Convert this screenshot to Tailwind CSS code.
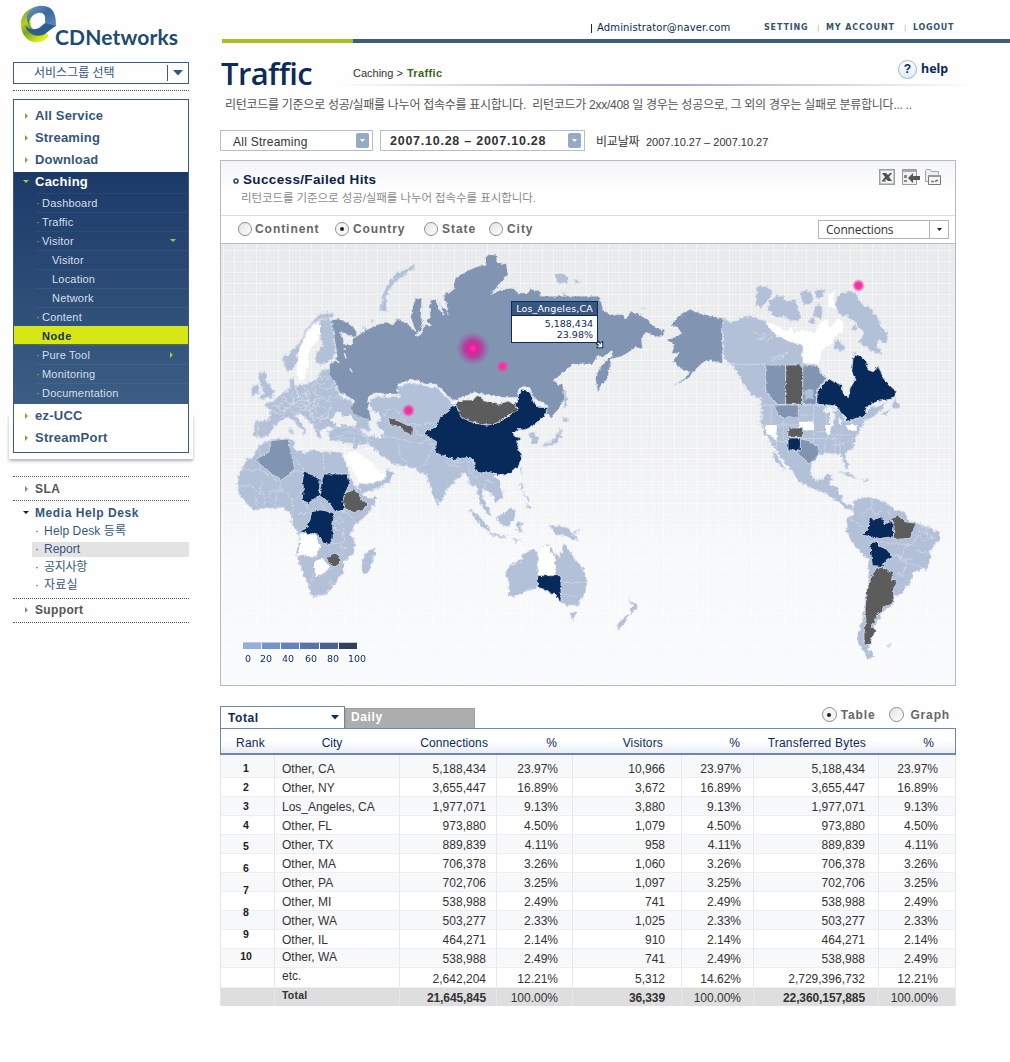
<!DOCTYPE html>
<html lang="ko">
<head>
<meta charset="utf-8">
<title>CDNetworks - Traffic</title>
<script src="https://cdn.jsdelivr.net/npm/@tailwindcss/browser@4"></script>
</head>
<body class="w-[1010px] h-[1062px] overflow-hidden bg-[#fefefe] font-['Liberation_Sans','Noto_Sans_CJK_KR',sans-serif] text-[12px] text-[#333]">
<div class="flex h-full">

<!-- Sidebar -->
<aside class="w-[220px] shrink-0 pl-[13px] text-[#35567c]">
  <div class="h-[62px] pl-[7px] pt-[5px] flex">
    <svg class="shrink-0" width="37" height="40" viewBox="0 0 37 40">
      <defs>
        <linearGradient id="lg" x1="0" y1="0" x2="0.6" y2="1"><stop offset="0" stop-color="#6f9440"/><stop offset=".4" stop-color="#b4cf22"/><stop offset=".6" stop-color="#7da024"/><stop offset="1" stop-color="#e0ee1c"/></linearGradient>
        <linearGradient id="lb" x1="0" y1="0" x2="1" y2="1"><stop offset="0" stop-color="#6f9cc9"/><stop offset=".5" stop-color="#3a699c"/><stop offset="1" stop-color="#5f8fc0"/></linearGradient>
      </defs>
      <path fill="url(#lg)" d="M16 2C9 3 3 8 1 16c-1 8 2 16 9 20 7 3 14 1 19-5l-9-7c-3 2-6 1-8-1-3-4-2-11 3-14l6-3z"/>
      <path fill="url(#lb)" d="M12 4c4-4 13-4 18-1 5 4 6 9 6 18l-9 1c-1-3-2-4-2-7 1-5-2-8-7-7-6 1-10 6-9 12C5 13 7 8 12 4z"/>
      <path fill="#2e5d90" d="M5 20c4 5 9 5 14 3l6-5 11 3c-4 2-7 5-11 8-8 4-17 1-20-9z"/>
    </svg>
    <div class="pt-[21px] -ml-[2px] font-['Lato','Open_Sans',sans-serif] font-bold text-[21px] leading-[22px] tracking-[0.160px] text-[#1c4a73]">CDNetworks</div>
  </div>
  <div class="w-[176px] h-[22px] border border-[#3d5a82] flex items-center pl-[20px] text-[12px] tracking-[0px]">
    <span class="w-[133px]">서비스그룹 선택</span>
    <span class="w-px h-[16px] bg-[#3d5a82]"></span>
    <svg class="ml-[5px]" width="10" height="6"><path d="M0 0h10L5 5.500z" fill="#35567c"/></svg>
  </div>
  <div class="w-[176px] mt-[6px] border-t border-dotted border-[#555]"></div>

  <nav class="relative w-[176px] mt-[8px] h-[354px] border border-[#3d5a82] bg-white">
    <div class="absolute -left-[5px] -right-[5px] -bottom-[7px] h-[45px] -z-10 shadow-[0_2px_3px_rgba(0,0,0,0.3)] bg-white"></div>
    <div class="h-[72px] pt-[5px] text-[13px] font-bold tracking-[0.160px]" id="top"></div>
    <div class="h-[232px] bg-gradient-to-b from-[#1c3a68] to-[#3c5e84]">
      <div class="flex items-center h-[20px] pl-[9px] text-white font-bold text-[13px] tracking-[0.250px]"><svg width="6" height="4" class="mr-[6px]"><path d="M0 0h6L3 3z" fill="#a3c93a"/></svg>Caching</div>
      <div id="sub" class="pt-px"></div>
    </div>
    <div class="text-[13px] font-bold tracking-[0.250px] pt-px" id="bot"></div>
  </nav>

  <div class="w-[176px] mt-[23px] border-t border-dotted border-[#555]"></div>
  <div class="w-[176px] h-[23px] flex items-center pl-[12px] font-bold text-[#555] tracking-[0.5px]"><svg width="4" height="6" class="mr-[6px]"><path d="M0 0v6L3 3z" fill="#888"/></svg>SLA</div>
  <div class="w-[176px] border-t border-dotted border-[#555]"></div>
  <div class="w-[176px] h-[97px] pt-[3px]">
    <div class="h-[18px] flex items-center pl-[10px] font-bold tracking-[0.580px]"><svg width="6" height="4" class="mr-[6px]"><path d="M0 0h6L3 3z" fill="#123"/></svg>Media Help Desk</div>
    <div class="ml-[19px] text-[12px] leading-[18px] tracking-[0.1px]">
      <div class="pl-[3px]">·<span class="ml-[5px]">Help Desk 등록</span></div>
      <div class="pl-[3px] bg-[#e3e3e3] h-[15px] leading-[15px] my-[1.500px] tracking-[0px]">·<span class="ml-[5px]">Report</span></div>
      <div class="pl-[3px]">·<span class="ml-[5px] tracking-[-0.300px]">공지사항</span></div>
      <div class="pl-[3px]">·<span class="ml-[5px]">자료실</span></div>
    </div>
  </div>
  <div class="w-[176px] border-t border-dotted border-[#555]"></div>
  <div class="w-[176px] h-[23px] flex items-center pl-[12px] pb-[2px] font-bold text-[#555] tracking-[0.350px]"><svg width="4" height="6" class="mr-[6px]"><path d="M0 0v6L3 3z" fill="#888"/></svg>Support</div>
  <div class="w-[176px] border-t border-dotted border-[#555]"></div>
</aside>

<!-- Main -->
<main class="w-[790px]">
  <div class="h-[39px] flex items-start pt-[21px] leading-[14px]">
    <span class="ml-[371px] w-[173px] text-[#12294f] whitespace-nowrap font-['DejaVu_Sans',sans-serif] text-[10px] tracking-[0.130px] flex items-center"><i class="w-px h-[9px] bg-[#12294f] mr-[5px]"></i>Administrator@naver.com</span>
    <span class="flex items-center font-['DejaVu_Sans'] font-bold text-[8px] text-[#34546f] whitespace-nowrap">
      <span class="w-[53px] tracking-[0.850px]">SETTING</span><span class="w-[9px] text-[#aaa] font-normal text-[7px]">|</span>
      <span class="w-[78px] tracking-[0.900px]">MY ACCOUNT</span><span class="w-[9px] text-[#aaa] font-normal text-[7px]">|</span>
      <span class="tracking-[0.700px]">LOGOUT</span></span>
  </div>
  <div class="flex h-[4px]"><span class="ml-[2px] w-[131px] bg-[#a8bf2b]"></span><span class="flex-1 bg-[#3e5b80]"></span></div>

  <div class="h-[41px] flex items-center">
    <h1 class="w-[133px] pl-[1px] pt-[18px] font-['Open_Sans',sans-serif] font-semibold text-[31px] leading-[30px] tracking-[-0.600px] text-[#0b2b5b]">Traffic</h1>
    <span class="pt-[19px] text-[11px] w-[545px]">Caching &gt; <b class="text-[#3a6324] tracking-[0.350px] ml-px">Traffic</b></span>
    <span class="mt-[11px] w-[19px] h-[19px] rounded-full border border-[#9dbac6] bg-gradient-to-b from-white to-[#dfecf7] flex items-center justify-center font-bold text-[12px] text-[#0b2b5b]">?</span>
    <b class="mt-[11px] ml-[4px] text-[12.500px] font-['Noto_Sans'] text-[#0b2b5b]">help</b>
  </div>
  <div class="ml-[115px] w-[640px] h-[2px] bg-gradient-to-r from-transparent via-[#9fa6c4] to-transparent"></div>
  <p class="h-[44px] pl-[5px] pt-[10px] text-[12px] leading-[18px] tracking-[-0.280px] text-[#555] whitespace-nowrap">리턴코드를 기준으로 성공/실패를 나누어 접속수를 표시합니다.&nbsp; 리턴코드가 2xx/408 일 경우는 성공으로, 그 외의 경우는 실패로 분류합니다... ..</p>

  <div class="h-[30px] flex items-start">
    <div class="w-[153px] h-[21px] border border-[#b4bec8] bg-white flex items-center pl-[12px] tracking-[0.250px]"><span class="w-[123px] pt-[2px]">All Streaming</span><span class="w-[13px] h-[15px] rounded-[2px] bg-[#96aac6] flex items-center justify-center"><svg width="5" height="3"><path d="M0 0h5L2.500 3z" fill="#fff"/></svg></span></div>
    <div class="ml-[7px] w-[205px] h-[21px] border border-[#b4bec8] bg-white flex items-center pl-[9px] font-bold text-[12.500px] tracking-[0.750px]"><span class="w-[178px] pt-[2px]">2007.10.28 – 2007.10.28</span><span class="w-[13px] h-[15px] rounded-[2px] bg-[#96aac6] flex items-center justify-center"><svg width="5" height="3"><path d="M0 0h5L2.500 3z" fill="#fff"/></svg></span></div>
    <div class="ml-[11px] h-[24px] flex items-center text-[12px]"><span class="w-[50px] tracking-[-0.200px]">비교날짜</span><span class="text-[11px]">2007.10.27 – 2007.10.27</span></div>
  </div>

  <section class="w-[736px] h-[526px] border border-[#b5bac4] bg-white">
    <div class="h-[55px] border-b border-[#dcdde0] bg-gradient-to-b from-[#f3f4f6] to-white to-60% flex justify-between">
      <div class="pl-[12px] pt-[11px]">
        <div class="flex items-center h-[17px]"><svg width="6" height="6" class="mr-[4px]"><circle cx="3" cy="3" r="2" fill="none" stroke="#35567c" stroke-width="1.700"/></svg><b class="text-[13.500px] text-[#0c2448] tracking-[0.350px]">Success/Failed Hits</b></div>
        <p class="pl-[8px] text-[11.500px] leading-[18px] text-[#8b8b8b] tracking-[-0.080px]">리턴코드를 기준으로 성공/실패를 나누어 접속수를 표시합니다.</p>
      </div>
      <div class="flex pt-[8px] pr-[13px]">
        <svg class="mr-[7px]" width="16" height="16"><rect x=".75" y=".75" width="14.500" height="14.500" fill="#f1f1f1" stroke="#9aa1a1" stroke-width="1.500"/><path d="M3 4h4l2 2 2-2h2l-3 4 3 4H9L7 10l-2 2H3l3-4z" fill="#4b5250"/><path d="M3 12h4" stroke="#4b5250"/></svg>
        <svg class="mr-[5px]" width="18" height="16"><path d="M.5.500h14v15H.500z" fill="#f0f0f0" stroke="#9b9b9b"/><path d="M1 2h13" stroke="#aaa" stroke-width="2"/><path d="M2 6h3v3H2zM2 11h3v2H2z" fill="#888"/><path d="M6 9l5-5v3h7v4h-7v3z" fill="#555"/></svg>
        <svg width="17" height="16"><path d="M.5 12.500V1.500l1-1h4l1 2h7v10z" fill="#eee" stroke="#a5a5a5"/><path d="M3.500 6.500h12v9h-12z" fill="#f7f7f7" stroke="#777"/><path d="M3 6h13v2H3z" fill="#999"/><path d="M6 12.500h3M10 12.500l3-1.500" fill="none" stroke="#777" stroke-width="1.500"/></svg>
      </div>
    </div>
    <div class="h-[28px] pb-px border-b border-[#b5bac4] flex items-center text-[12px] font-bold text-[#666] tracking-[0.950px]">
      <div class="ml-[17px] w-[97px] flex items-center gap-[3px]"><i class="w-[14px] h-[14px] rounded-full border border-[#8f8f8f] bg-gradient-to-br from-[#e2e2e2] to-white"></i>Continent</div>
      <div class="w-[89px] flex items-center gap-[4px] tracking-[0.900px]"><i class="w-[14px] h-[14px] rounded-full border border-[#8f8f8f] bg-[#f5f5f5] flex items-center justify-center"><i class="w-[4px] h-[4px] rounded-full bg-[#222]"></i></i>Country</div>
      <div class="w-[65px] flex items-center gap-[4px]"><i class="w-[14px] h-[14px] rounded-full border border-[#8f8f8f] bg-gradient-to-br from-[#e2e2e2] to-white"></i>State</div>
      <div class="w-[329px] flex items-center gap-[4px]"><i class="w-[14px] h-[14px] rounded-full border border-[#8f8f8f] bg-gradient-to-br from-[#e2e2e2] to-white"></i>City</div>
      <div class="w-[131px] h-[19px] mt-px border border-[#b5b5b5] flex items-center pl-[7px] font-normal text-[#333] text-[12px] tracking-[-0.200px] font-['Open_Sans']"><span class="w-[103px]">Connections</span><span class="w-px h-full bg-[#b5b5b5]"></span><svg class="ml-[7px]" width="5" height="3"><path d="M0 0h5L2.500 3z" fill="#222"/></svg></div>
    </div>

    <div class="relative h-[441px]">
      <svg class="block" width="734" height="441" viewBox="221 244 734 441">
        <defs>
          <linearGradient id="sea" x1="0" y1="0" x2="0" y2="1"><stop offset="0" stop-color="#e8e9ea"/><stop offset=".45" stop-color="#eff0f2"/><stop offset=".7" stop-color="#f7f8fa"/><stop offset="1" stop-color="#f9fafb"/></linearGradient>
          <pattern id="grid" width="11" height="11" x="223" y="250" patternUnits="userSpaceOnUse"><path d="M.5 0v11M0 .500h11" stroke="#fff" stroke-opacity=".42"/><path d="M6.500 0v11M0 6.500h11M3.500 0v11M0 3.500h11" stroke="#fff" stroke-opacity=".1"/></pattern>
          <radialGradient id="hot"><stop offset="0" stop-color="#ff35b0"/><stop offset=".25" stop-color="#e0209c"/><stop offset=".5" stop-color="#bc2c98" stop-opacity=".8"/><stop offset="1" stop-color="#a04c9c" stop-opacity="0"/></radialGradient>
          <radialGradient id="dot"><stop offset="0" stop-color="#ff1f9c"/><stop offset=".5" stop-color="#f23aa6"/><stop offset="1" stop-color="#f23aa6" stop-opacity="0"/></radialGradient>
          <filter id="coast" x="-5%" y="-5%" width="110%" height="110%" color-interpolation-filters="sRGB"><feTurbulence type="fractalNoise" baseFrequency=".08" numOctaves="3" seed="4"/><feDisplacementMap in="SourceGraphic" scale="17" xChannelSelector="R" yChannelSelector="G"/></filter>
          <filter id="edge" x="-5%" y="-5%" width="110%" height="110%" color-interpolation-filters="sRGB"><feTurbulence type="fractalNoise" baseFrequency=".1" numOctaves="2" seed="9"/><feDisplacementMap in="SourceGraphic" scale="11" xChannelSelector="R" yChannelSelector="G"/></filter>
        </defs>
        <rect x="221" y="244" width="734" height="441" fill="url(#sea)"/>
        <rect x="221" y="244" width="734" height="441" fill="url(#grid)"/>

        <g transform="translate(220 245) scale(.33333)">
          <g filter="url(#coast)" fill="#b2c0d8" stroke="#d3dbe8" stroke-width="2" stroke-linejoin="round">
            <!-- Europe and Arctic -->
            <path d="M190 350v-15l25-15 30-35 15-35 25-30 20-15 15-5 25 10-15 12h-30l-25 18-17 25-13 30-10 25-3 30-17 25-10 5-10-10z"/>
            <path d="M300 225l30-5 10 40 10 60-15 25-35 17-15-12 5-25 20-25-10-30z"/>
            <path d="M120 385l15-5 7 15-7 10 15 15 15 20-10 18-30 4-10-4 15-13-5-20-10-20zM95 425l20-10 3 30-23 10z"/>
            <path d="M330 370l-25 5-10 20-10 10-35 15-25 5-5-25-12 5 2 25-25 15-20 20-35 15 20 15v30l-45 5-5 40 25 10 25-15 15-25 15-10 25-15 20 15 25 30-5 15 15-20-20-25-15-20 15-5 35 30 10 20 5 20 15 5-5-20 20-15h15l10 10 35-5 25 10 25-10 20 10-5-40-30-20-20-30-40-20zM210 550h6v20h-6z"/>
            <path d="M325 560l25-10 35-5 35 10 20 15-10 20-30 5-40-5-30-5z"/>
            <path d="M475 195l10-15 5-40 20-35 20-20 30-13 20-12v12l-30 20-30 23-20 35-3 30 8 20z"/>
            <path d="M1003 330l18-5 24 12v18l-30 3z" transform="translate(0-240)"/>
            <path d="M1060 102l25 8-15 6zM1028 138l8 6-8 4zM1260 190l20-3-10 6zM430 245l12 5-8 12zM455 222l10 5-8 6z"/>
            <!-- Asia -->
            <path d="M445 470l25-15h70l-10-30 50-10 70 15 50 50h60l140 160-80 50 20 20 10 30-5 20-20 15-5-20-15-15-15-10-5 20 10 25 15 25 5 15-15-10-15-25-10-30-5-25-20-10-15-35-15 10-15 20-30 30-5 25-15 12-15-27-15-40-5-25-15 5-15-20-25-5-40-5-30-20-35-30-15-15-25 5-15 15-8-20 8-15-25 0-35-3 35-15 35 5 45 10 15-30-10-45z"/>
            <path d="M420 715l30 0 40-12 10-28 22 10-12 25-35 20-50 15-10-20zM650 765l10 15-8 8zM925 565l20-5 10 30-15 10-10-20zM1030 515l15 10-15 10zM1020 550l8 25-23 20-30 10-10-5 35-15 10-15zM1035 435l7 35-7 20-5-30zM900 672l6-6 0 18z"/>
            <path d="M745 793l30 17 33 40-3 10-25-20zM808 863l52 12-2 5-48-10zM830 815l25-10 15-18 18 13-8 25-15 20-25-8zM890 835l25-2-15 12 10 15h-17zM990 840l50 5 20 25 20 17-25-4-20-13-20 3-15-18zM900 715l10 10-5 15zM905 740l25 25-5 5zM920 775l15 15-12 0zM880 885l25-3-20 8zM1055 865l22-14-6 12z"/>
            <!-- Africa -->
            <path d="M130 595l20-10 55-5 17 5-2 25 30 15 30-10 30 5 55 2 7 18 18 50 10 25 15 20 25 25 30-5-5 20-25 35-40 35-5 25 10 25-5 30-30 25 2 30-17 25-20 25-25 20-35 3-5-23-25-55-15-45 8-45-3-20-20-30v-25l-25-23-40 3-50 5-20-20-25-30-3-25 3-25 25-50 20-10 15-30zM465 905v20l-20 60h-15l-5-20 7-35z"/>
            <!-- Oceania -->
            <path d="M862 965l33-15 20-25 25-12 15 12 5-20 30-5 10 25 20 10 15-40 15 30 35 40 17 40-12 50-15 25-30 3-20-10-15-28-25-5-30-15-40 15-35 15-15-5 5-30-12-35zM1050 1103h20l-10 22zM1225 1057l15 18 15 8-20 24-5-12 7-15zM1225 1105l2 10-17 25-12 12-10-12 17-15z"/>
            <!-- North America -->
            <path d="M1507 220l33 12 25-12 25-8 42 16 78 62 38 10v58l42 2 15 30 15 10-30 35v43l40 7 35 15 10 30 45-15 25-25 55-15-30 35-35 15-15 30-15 25-5 30-26 14 12 46-10-4-16-40-41-1-20 5-23 20-7 30 15 25 30-5 10-15 15 5-10 25 25 15 3 15 17 30 20 5 5 15-25-5-20-20-30-20-30-15-30-10-25-15-15-20-20-25-25-35-45-65-10-35v-65l-35-20-25-40-20-35-33-30z"/>
            <path d="M1660 615l20 30 15 30-15-10-20-30zM1610 125l25-3 25 18-15 25-20 23-22-8 7-20zM1650 165l30-15 20 20 25-5 20 55-25 10-30-15h-30l-15-25zM1744 142l26-7 9 22-10 22-18 2zM1788 134h29l-12 24h-18zM1782 182l20-5 8 30-12 14-16-8zM1768 222l14-4 4 18h-14z"/>
            <path d="M1862 144l28-6 20 8 12 26 28 20 22 24 12 30 20 20-4 28-28-8-6 14 22 26-22-2-30-18-18-16 14-24-20-28-26-22-24-8-18-28zM1842 290l14-6 20 28-14 6-20-8zM1895 246l10-4 6 10-10 6zM1898 322l10 0-6 10z"/>
            <path d="M2015 480l10-20 20 30h-25zM1858 680l22 3 30 14-5 4-35-14zM1920 705l25-2v8zM1985 505l25-12-10 18z"/>
            <!-- South America -->
            <path d="M1900 770l30-15 15 2 35 8 30 15 10 13 35 7 10 25 25 10 30 10 35 15 3 20-28 40v30l-10 20-40 10-5 25-30 40-15 8-15-8 5 30-35 30-35 60-5 50 20 20-20 5-30-45-2-30 17-50 15-100v-70l-20-20-25-30-22-40 2-30 20-15v-20zM2000 1203l15-6-8 8z"/>
          </g>

          <!-- Inland seas -->
          <g filter="url(#coast)" fill="#eef0f3">
            <path d="M335 525l10-20 20-5 5 15 20-5 20 20-5 15-25-5-30 5zM450 505l25-5 5 20-10 20 20 20-5 20-20-5-5-30-15-25z"/>
            <path d="M1805 490l25-5 20 12-15 5 15 5-10 35-12 5 2-40-15-5zM1855 510l12 20-10 15z"/>
            <path d="M415 600l20 20 25 20 15 15-12-3-28-20zM367 620l10 20 20 50 15 20-3 5-15-15-20-50zM1922 498l24-18 8 4-24 20z"/>
          </g>

          <!-- Inner borders -->
          <g fill="none" stroke="#d6deea" stroke-width="2" filter="url(#coast)">
            <path d="M285 405l20 25 40-5M285 430l5 25 50 0 55 10M150 495l40 20 10-25-20-20M190 445l15 30 30-20-10-30M205 475l20 30 35-15-15-35 35-15 20 20-15 30-25 5M260 490l20 35 30-15 25-20-10-35M200 490l25 20M240 440l25 15 0 30M310 510l-15 30-20 0M115 530l-5 45M170 465l15 15 25-30M225 480l30 15M265 430l-10 30 30 25M295 395l35 5M300 520l40 0M160 480l20 5M215 440l5 30M270 505l35 20 20-10M290 445l-10 50M305 460l25 10"/>
            <path d="M165 475l20 25 25-10 15-35-20-15M180 455l30 25 40-15 30 5M190 500l30-30 40 15 30-25M230 430l10 40 30 25 10 30M250 425l10 30M175 485l20-30M235 500l20-25 40 30M290 480l30 10M330 480l-5 40M270 430l20-15 25 5"/>
            <path d="M495 515l5-20 25-5 35 45 35 5 55-10M470 580l35-5 35 5 35 15M535 595l5 40 20 15-10 25M590 600l30-15 20 20-20 45-25 25M620 575l30 30 20 25 40 25 40-5M680 640l5 20 35 5M705 660l15-20M440 575l5 30-25 5M385 600l40-10M430 550l30 25M740 660l15 30 20 10 10 20 20 10M755 640l10 40M780 680l20 30 20 0M580 540l15 30 50-5M425 560l30 30"/>
            <path d="M70 675h50v-70M110 670l70 40 5 30M180 705l45-25 30 0M310 620v65M60 720l40 5 20 25M120 750l5-40M150 765v-25l40-5M190 735l30 30 25-25M215 755l5 55M245 765l30 35M235 810l40-10M345 800l35 0 30 35M340 850l30 5 0 40M330 895l30-5 10 40M250 935h45M280 985l-5 25M285 995l30-10 25-20M365 905l15 10M300 775l20 20M105 750l10 40M130 740l5 40M170 750l-5 40M225 640l30 40M326 1016l6-8 8 6-6 9zM350 825l12-8 6 10-12 8z"/>
            <path d="M1540 270M1600 260l20 10 30-5 8 12-18 10-20-8M1610 280l30-5M1650 340l25-5 30-15-22 22-28 2M1955 760l5 50 30-10M2010 780l-5 30M1890 820l30 20 20 30M1975 890l50 5 50 5 20-30M2095 850l15 40 30-15M2060 890l-20 60 40-10M2020 930l40 15-10 40M2085 915l40 10M2100 850l5-20M2125 840l-5 40M2050 950l60 20M2030 985l25 10M1950 790l-30 20M2105 860l40 20"/>
          </g>
          <g fill="none" stroke="#d6deea" stroke-width="2" filter="url(#edge)">
            <path d="M1507 358h130M1637 358v80l32 42M1610 480h240M1653 480v65M1610 540h35M1690 520v65M1670 540h70M1735 480v50M1780 480v120M1740 510h40M1740 555h45M1745 580h105M1785 560h40M1820 500v40M1845 580v50M1860 575v50M1830 570h60M1640 590h70M1670 590v35M1750 600h45v30M1880 530l30 10M1870 600l30-20M1840 600l40-5M1815 590v35M1895 520v30M1925 495l-20 30"/>
            <path d="M1029 1012h72M1023 1045l50 12"/>
          </g>

          <g filter="url(#edge)" stroke="#d3dcea" stroke-width="2.500" stroke-linejoin="round">
            <!-- 20-40 band -->
            <g fill="#8195b3">
              <path stroke-width="1.500" d="M335 225l20-3 30 13 23 20 2 15-15 5-20-10-17-3 10 13 4 25 23 0 5-20 25-15 15-10 30-15 25-8 25 8 10-18 30 13 15 13 12 12-15-45 5-25 10-30h18l2 30-5 25 12 22 18-22-5-28 5-20 20-5 12 25 15 5 5 20-5-40-10-20 32-18 5-35 38-22 30-13 25-3-5-22 15-10 20 2 2 23 28 5 5 30-25 25-25 35 30-15 35-5 15 15h30l5-13 30 8 2 15h178l10 40 20 15h40l10 13 10-20 25 5 25 15 25 25 30 10-5 15-20 5-15-10-17-5-13 20 3 30-18-5-40 25-35 10-5 25-5 30-25 30-5 15-8-45 18-35 30-30 5-17-20 12-10 10-15-5-15 25h-60l-40 35-20 15 15 12 13-2 7 40-15 30-25 30-15-10 5-25-45-25-10-30-25-5-10 15v20h-45l-85-15-65 25-50-50h-30l-40-15-45 15-5 20 10 10h-40l-30-5-25 15v25l10 45-55-20-5-20 10-20-25-15-25-15-10-30-15-15v-35l15-10 10-15-5-20-5-25z"/>
              <path stroke-width="1.500" d="M1410 193l40 17 57 10v135l-22-5-25-5-20 15-20 20-15 20-45 22 40-27 10-15-30-10-20-20 15-25-20 0 10-25-25-15 30-10 15-10-15-20-18-5 18-20 20-15z"/>
              <path d="M150 587l55-5 7 33 13 60-40 30-25-15-55-45 43-25zM1637 360h60v118h-29l-31-43zM1748 360h42l15 30 15 10-30 35v43h-42zM1662 480h73v35l-45 3-15-8zM1741 582l19 3 35 20v25l-25 27-20-17-25-20 16-3z"/>
            </g>
            <path fill="#b2c0d9" stroke="none" d="M1752 437l15-5 13 2 2 30-15-6-12 6z"/>
            <!-- No traffic -->
            <g fill="#fff" stroke="none">
              <path d="M280 240h20v25l-10 25-18 20-10 30 6 15-10 20v20l-18 15-8-25-2-20 6-45 9-20 15-35z"/>
              <path d="M390 620h20l25 20 20 10 20 30 25 5-10 18-40 12h-30l-15-30-20-30-13-20zM238 865l52 5 5 25 7 2-12 38-58-5 8-30zM290 945l20-5 20 25-20 20-25 10-3-35zM953 920l12-17h25v17l15 13 1 58h-53z"/>
              <path d="M1632 228l33 12 35 20 15-15 5 20 30-10 35 10 15-35 20-5 10 25 25-30 15 10v30l-30 15v20l-30 15-15 45h-47l2-55-40-10-45-20zM1637 540h33v48l-33-28zM1737 530h43l5 25h-35l-2-7-11-3zM1815 540h17v20l-7 13-8-13zM1880 540h30v18l-28-3zM1825 150l25-15-10 25 10 30-25-5z"/>
            </g>
            <!-- Highest band -->
            <g fill="#072a5a">
              <path d="M660 515l25-15 10-18 23 3 7 25 40 25 35 5 40-10 30-20 25-20-20-10 20-10v-20l10-15 25 5 10 30 15 17 30 1-15 27-35 30-20 10-15-5-20 15 5 10 20 3-15 12 10 35 5 15-10 25-25 20-35 5-35-10-20 8-15-18v-20l-15-13-25 3-25 3-30-11-25-12 5-30-30-18-8-12 38-15z"/>
              <path d="M253 678l47 25-2 47-33 25-18-10 3-40-3-15zM312 687h70l8 28-20 40 2 40-27 5-20-30-25-20v-20l8-30zM275 800l25-5 15 2 28 8-5 40 2 30-10 23-20-3-15-25-30-5-27-5 20-10 12-25zM953 992h70v81l-18-28h-15l-5-8-32-10z"/>
              <path d="M1825 402l40 18 5 25 15 13 5-28 15-25-10-25 5-50 25 5 15 15 5 25 15 5 15-18 15 38 25 30 15 10-15 22-45 8-30 15-5 30-25 5-35 10 5-12-20-18-5-15-30-5-35-2 2-41zM1704 579h37v36h-32v6h-5z"/>
              <path d="M1948 817l12 8 25-10 10 22 15-10 13 8-3 40-40 5-55-10 20-20zM1950 893l20-3 8 13 22 10 18 24-23 13-7 15-31-3-5-37z"/>
            </g>
            <!-- Excluded -->
            <g fill="#5c5c5c">
              <path d="M705 478l25-13h30l8-15 20 8 2 9 45 11 30-10 20 12 10 15-30 15-25 20-35 10-55-10-28-15-7-20zM505 515l10 5 25 10 20 10 20 10-2 22-18-7-20-20-32-7zM375 745l25-10 15 10 10 20 22 12-17 16-30 9-22-9-10-23zM320 940l20-15 20 5-2 27-13 8-20-10z"/>
              <path d="M1697 360h51v118h-51zM1704 549h44v28h-44zM2015 820l20-7 20 17 33 5-18 45-40 3-10-8 3-35zM1970 968h20l28 17-3 20 15-2-10 32 3 35-13 10-20 5-5 18-15 7-5 25-15 5 20 17-15 23-7 20-16-3v-32l6-40-3-30 5-60 10-30 10-20z"/>
            </g>
          </g>
          <!-- Gulf of Ob and northern lakes -->
          <g fill="none" stroke="#e9ebef" stroke-width="7" stroke-linecap="round" stroke-linejoin="round">
            <path d="M608 165l-2 45 6 25-12 32-12 5M614 232l18 10M650 165l8 20 12 22M622 180l8 14" filter="url(#edge)"/>
            <path stroke-width="4" d="M345 343l12 10M373 325l5 14M390 372l6 8M372 312h4"/>
          </g>
          <path d="M1540 365l10 22 14 10-4 10 14 16 2 16 16 16" fill="none" stroke="#e9ebef" stroke-width="4" stroke-dasharray="5 4"/>
        </g>

        <circle cx="473" cy="348.500" r="17" fill="url(#hot)"/>
        <circle cx="502.500" cy="366.500" r="6" fill="url(#dot)"/>
        <circle cx="408.500" cy="410.500" r="6.500" fill="url(#dot)"/>
        <circle cx="858.500" cy="285.500" r="6.500" fill="url(#dot)"/>
        <path d="M597 342l4.500 4.500" stroke="#0b2b5b" stroke-width="4"/><path d="M602.500 341v6.500h-6" fill="none" stroke="#0b2b5b" stroke-width="1.500"/><path d="M596 341l5.500 5.500M601.500 343v3.500h-3.500" fill="none" stroke="#fff" stroke-width="1.500"/>
      </svg>
      <div class="absolute left-[290px] top-[57px] w-[87px] h-[42px] border border-[#0b2b5b] bg-white text-[#0b2b5b] text-[10px] leading-[11px] font-['DejaVu_Sans']">
        <div class="h-[14px] bg-[#38567f] border-b border-[#0b2b5b] text-white text-center text-[9.500px] leading-[14px] tracking-[0.150px] whitespace-nowrap">Los_Angeles,CA</div>
        <div class="pr-[4px] pt-[2px] text-right text-[9.500px]">5,188,434<br>23.98%</div>
      </div>
      <div class="absolute left-[22px] top-[398px] text-[#0b2b5b]">
        <div class="w-[114px] h-[7px] grid grid-cols-6 gap-px border-t border-[#c3c9d4]"><i class="bg-[#96aedb]"></i><i class="bg-[#7593cb]"></i><i class="bg-[#6482bd]"></i><i class="bg-[#5873ac]"></i><i class="bg-[#4a618f]"></i><i class="bg-[#303f5e]"></i></div>
        <div class="flex mt-[4px] text-[9.500px] leading-[12px] font-['DejaVu_Sans'] whitespace-nowrap"><span class="w-[15px] pl-[2px]">0</span><span class="w-[23px] pl-[2px]">20</span><span class="w-[24px] pl-px">40</span><span class="w-[22px]">60</span><span class="w-[21px]">80</span><span>100</span></div>
      </div>
    </div>
  </section>

  <!-- Table -->
  <div class="mt-[20px] h-[22px] w-[736px] flex items-end">
    <div class="w-[125px] h-[22px] border border-b-0 border-[#6f86a5] bg-white flex items-center pl-[7px] font-bold text-[#0b2b5b] tracking-[0.6px]"><span class="w-[103px]">Total</span><svg width="8" height="5"><path d="M0 0h8L4 4.500z" fill="#0b2b5b"/></svg></div>
    <div class="w-[130px] h-[20px] bg-[#adadad] border border-b-0 border-[#a0a0a0] pl-[5px] leading-[17px] font-bold text-white tracking-[0.6px]">Daily</div>
    <div class="flex-1 flex justify-end gap-[14px] h-[27px] pr-[6px] font-bold text-[#666] tracking-[0.850px]">
      <div class="flex items-center gap-[4px]"><i class="w-[15px] h-[15px] rounded-full border border-[#8f8f8f] bg-[#f5f5f5] flex items-center justify-center"><i class="w-[4px] h-[4px] rounded-full bg-[#222]"></i></i>Table</div>
      <div class="flex items-center gap-[6px]"><i class="w-[15px] h-[15px] rounded-full border border-[#8f8f8f] bg-gradient-to-br from-[#e2e2e2] to-white"></i>Graph</div>
    </div>
  </div>
  <div class="w-[736px] h-[27px] border border-[#6f86a5] border-b-2 bg-gradient-to-b from-white via-white to-[#e9eef4] text-[#0b2b5b] flex items-center pt-[3px]">
    <span class="w-[59px] text-center tracking-[0.250px]">Rank</span><span class="w-[104px] text-center">City</span><span class="w-[104px] text-right tracking-[0.100px]">Connections</span><span class="w-[69px] text-right">%</span><span class="w-[106px] text-right tracking-[0.150px]">Visitors</span><span class="w-[77px] text-right">%</span><span class="w-[126px] text-right tracking-[0.2px]">Transferred Bytes</span><span class="w-[68px] text-right">%</span>
  </div>
  <div class="grid w-[736px]">
    <div class="[grid-area:1/1]" id="rows"></div>
    <div class="[grid-area:1/1] w-[52px] text-center font-bold text-[10.500px] text-[#222]" id="ranks"></div>
  </div>
</main>
</div>
<script>
const item = t => `<div class="flex items-center h-[22px] pl-[11px]"><svg width="4" height="6" class="mr-[6px]"><path d="M0 0v6L3 3z" fill="#8aa52e"/></svg>${t}</div>`;
document.getElementById('top').innerHTML = ['All Service','Streaming','Download'].map(item).join('');
document.getElementById('bot').innerHTML = ['ez-UCC','StreamPort'].map(item).join('');
const sub = [['Dashboard'],['Traffic'],['Visitor','d'],['Visitor','i'],['Location','i'],['Network','i'],['Content'],['Node','a'],['Pure Tool','r'],['Monitoring'],['Documentation']];
document.getElementById('sub').innerHTML = sub.map(([t,k]) => k === 'a'
  ? `<div class="h-[19px] bg-[#d7e615] text-[#16304f] font-bold text-[11px] leading-[20px] pl-[28px] tracking-[0.6px] border-b border-[#4c7044]">${t}</div>`
  : `<div class="h-[19px] ml-[22px] border-t border-white/5 text-[#d5dfeb] text-[11px] flex items-center tracking-[0.200px]"><span class="w-[6px] text-[#9ec03c]">${k==='i'?'':'·'}</span><span class="${k==='i'?'pl-[10px] w-[128px]':'w-[128px]'}">${t}</span>${k==='d'?'<svg width="6" height="4"><path d="M0 0h6L3 3z" fill="#a3c93a"/></svg>':k==='r'?'<svg width="4" height="6"><path d="M0 0v6L3 3z" fill="#a3c93a"/></svg>':''}</div>`).join('');
const d = [['Other, CA','5,188,434','23.97%','10,966'],['Other, NY','3,655,447','16.89%','3,672'],['Los_Angeles, CA','1,977,071','9.13%','3,880'],['Other, FL','973,880','4.50%','1,079'],['Other, TX','889,839','4.11%','958'],['Other, MA','706,378','3.26%','1,060'],['Other, PA','702,706','3.25%','1,097'],['Other, MI','538,988','2.49%','741'],['Other, WA','503,277','2.33%','1,025'],['Other, IL','464,271','2.14%','910'],['Other, WA','538,988','2.49%','741'],['etc.','2,642,204','12.21%','5,312','14.62%','2,729,396,732'],['Total','21,645,845','100.00%','36,339','100.00%','22,360,157,885']];
document.getElementById('rows').innerHTML = d.map((r,i) => {
  const tot = i === 12, b = tot ? 'font-bold tracking-[-0.100px]' : '';
  const h = i === 0 ? 'h-[23px]' : i === 11 ? 'h-[20px]' : tot ? 'h-[18px]' : 'h-[19px]';
  const pt = i === 0 ? 'pt-[6px]' : tot ? 'pt-[2px]' : i === 11 ? 'pt-[3px]' : 'pt-[2px]';
  const bg = tot ? 'bg-[#dedede]' : i % 2 ? 'bg-white border-b border-[#eeeeef]' : 'bg-[#f7f8fa] border-b border-[#eeeeef]';
  const up = i > 9 ? 'pb-[3px]' : pt;
  const c = (w, t, p, x='') => `<span class="${w} ${p} ${x} ${pt} h-full flex items-center justify-end border-r border-[#e6e7ea]">${t}</span>`;
  return `<div class="flex items-center ${h} ${bg} border-l border-l-[#e4e6ea]"><span class="w-[54px] h-full border-r border-[#e6e7ea]"></span><span class="w-[125px] pl-[7px] h-full flex items-center border-r border-[#e6e7ea] ${up} ${tot?'font-bold text-[10.500px] tracking-[0.2px]':''}">${r[0]}</span>`
   + c('w-[97px]', r[1], 'pr-[10px]', b) + c('w-[76px]', r[2], 'pr-[14px]') + c('w-[109px]', r[3], 'pr-[16px]', b) + c('w-[72px]', r[4]||r[2], 'pr-[12px]') + c('w-[125px]', r[5]||r[1], 'pr-[13px]', b) + c('w-[77px]', r[2], 'pr-[17px]') + '</div>';
}).join('');
const rh = ['h-[26px] leading-[26px]','h-[19px] leading-[12px]','h-[19px] leading-[12px]','h-[19px] leading-[12px]','h-[22px] leading-[16px]','h-[22px] leading-[16px]','h-[22px] leading-[16px]','h-[22px] leading-[16px]','h-[22px] leading-[16px]','h-[22px] leading-[16px]'];
document.getElementById('ranks').innerHTML = rh.map((c,i) => `<div class="${c}">${i+1}</div>`).join('');
</script>
</body>
</html>
